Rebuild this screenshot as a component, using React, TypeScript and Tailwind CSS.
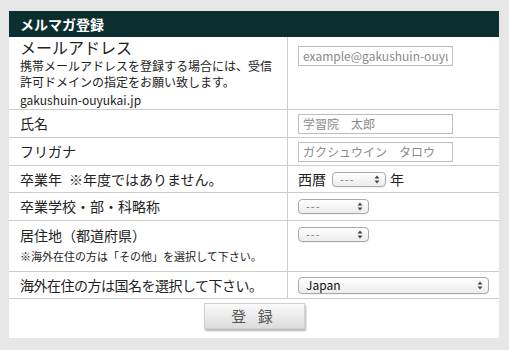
import React from "react";

const Arrows = () => (
  <svg width="6" height="9" viewBox="0 0 6 9" className="shrink-0">
    <path d="M3 0.5 L5.5 3.5 H0.5 Z" fill="#444" />
    <path d="M3 8.5 L5.5 5.5 H0.5 Z" fill="#444" />
  </svg>
);

const Sel = ({ w, label, dark }: { w: string; label: string; dark?: boolean }) => (
  <div
    className={`${w} rounded-[4px] border border-[#a9a9a9] bg-gradient-to-b from-white to-[#ececec] flex items-center justify-between pl-[7px] pr-[5px] shadow-[0_1px_0_rgba(0,0,0,0.05)]`}
  >
    <span className={dark ? "text-[12px] leading-none text-[#111]" : "text-[11px] leading-none text-[#777] tracking-[1px]"}>{label}</span>
    <Arrows />
  </div>
);

const Inp = ({ ph }: { ph: string }) => (
  <input
    readOnly
    placeholder={ph}
    className="w-[155px] h-[20px] border border-[#bdbdbd] bg-white px-[4px] text-[12px] placeholder:text-[#8a8a8a] outline-none"
    style={{ fontFamily: "inherit" }}
  />
);

export default function App() {
  return (
    <div
      className="w-[509px] h-[350px] bg-[#e6e6e6] pt-[11px] pl-[9px] pr-[10px] pb-[12px] text-[#222]"
      style={{ fontFamily: '"Noto Sans CJK JP", "Noto Sans", sans-serif' }}
    >
      <div className="bg-white h-full flex flex-col">
        <div className="h-[26px] bg-[#0b2f2f] text-white font-bold text-[14px] flex items-center pl-[11px]">
          メルマガ登録
        </div>
        {/* email */}
        <div className="h-[73px] flex border-b border-[#cccccc]">
          <div className="w-[279px] border-r border-[#cccccc] pl-[11px]">
            <div className="text-[16px] leading-[21px]">メールアドレス</div>
            <div className="text-[12px] leading-[16px]">
              携帯メールアドレスを登録する場合には、受信
              <br />
              許可ドメインの指定をお願い致します。
            </div>
            <div className="text-[12px] leading-[16px] mt-[2px]">gakushuin-ouyukai.jp</div>
          </div>
          <div className="flex-1 pl-[10px] pt-[5px]">
            <Inp ph="example@gakushuin-ouyukai.jp" />
          </div>
        </div>
        {/* name */}
        <div className="h-[28px] flex border-b border-[#cccccc]">
          <div className="w-[279px] border-r border-[#cccccc] pl-[11px] flex items-center text-[14px]">氏名</div>
          <div className="flex-1 pl-[10px] flex items-center">
            <Inp ph="学習院　太郎" />
          </div>
        </div>
        <div className="h-[28px] flex border-b border-[#cccccc]">
          <div className="w-[279px] border-r border-[#cccccc] pl-[11px] flex items-center text-[14px]">フリガナ</div>
          <div className="flex-1 pl-[10px] flex items-center">
            <Inp ph="ガクシュウイン　タロウ" />
          </div>
        </div>
        <div className="h-[27px] flex border-b border-[#cccccc]">
          <div className="w-[279px] border-r border-[#cccccc] pl-[11px] flex items-center text-[14px]">
            卒業年<span className="inline-block w-[7px]" />※年度ではありません。
          </div>
          <div className="flex-1 pl-[10px] flex items-center text-[14px]">
            <span>西暦</span>
            <span className="w-[6px]" />
            <Sel w="w-[54px] h-[15px]" label="---" />
            <span className="w-[4px]" />
            <span>年</span>
          </div>
        </div>
        <div className="h-[28px] flex border-b border-[#cccccc]">
          <div className="w-[279px] border-r border-[#cccccc] pl-[11px] flex items-center text-[14px]">卒業学校・部・科略称</div>
          <div className="flex-1 pl-[10px] flex items-center">
            <Sel w="w-[71px] h-[15px]" label="---" />
          </div>
        </div>
        <div className="h-[51px] flex border-b border-[#cccccc]">
          <div className="w-[279px] border-r border-[#cccccc] pl-[11px] pt-[4px]">
            <div className="text-[14px] leading-[20px]">居住地（都道府県）</div>
            <div className="text-[11px] leading-[16px] mt-[3px]">※海外在住の方は「その他」を選択して下さい。</div>
          </div>
          <div className="flex-1 pl-[10px] pt-[6px]">
            <Sel w="w-[71px] h-[15px]" label="---" />
          </div>
        </div>
        <div className="h-[27px] flex border-b border-[#cccccc]">
          <div className="w-[279px] border-r border-[#cccccc] pl-[11px] flex items-center text-[14px] tracking-[-0.5px]">海外在住の方は国名を選択して下さい。</div>
          <div className="flex-1 pl-[10px] flex items-center">
            <Sel w="w-[191px] h-[17px]" label="Japan" dark />
          </div>
        </div>
        <div className="flex-1 flex justify-center pt-[4px]">
          <div className="w-[101px] h-[26px] bg-gradient-to-b from-[#fafafa] to-[#dcdcdc] border border-[#d0d0d0] shadow-[1px_2px_2px_rgba(0,0,0,0.3)] flex items-center justify-center text-[15px] text-[#555] tracking-[4px]">
            登 録
          </div>
        </div>
      </div>
    </div>
  );
}
